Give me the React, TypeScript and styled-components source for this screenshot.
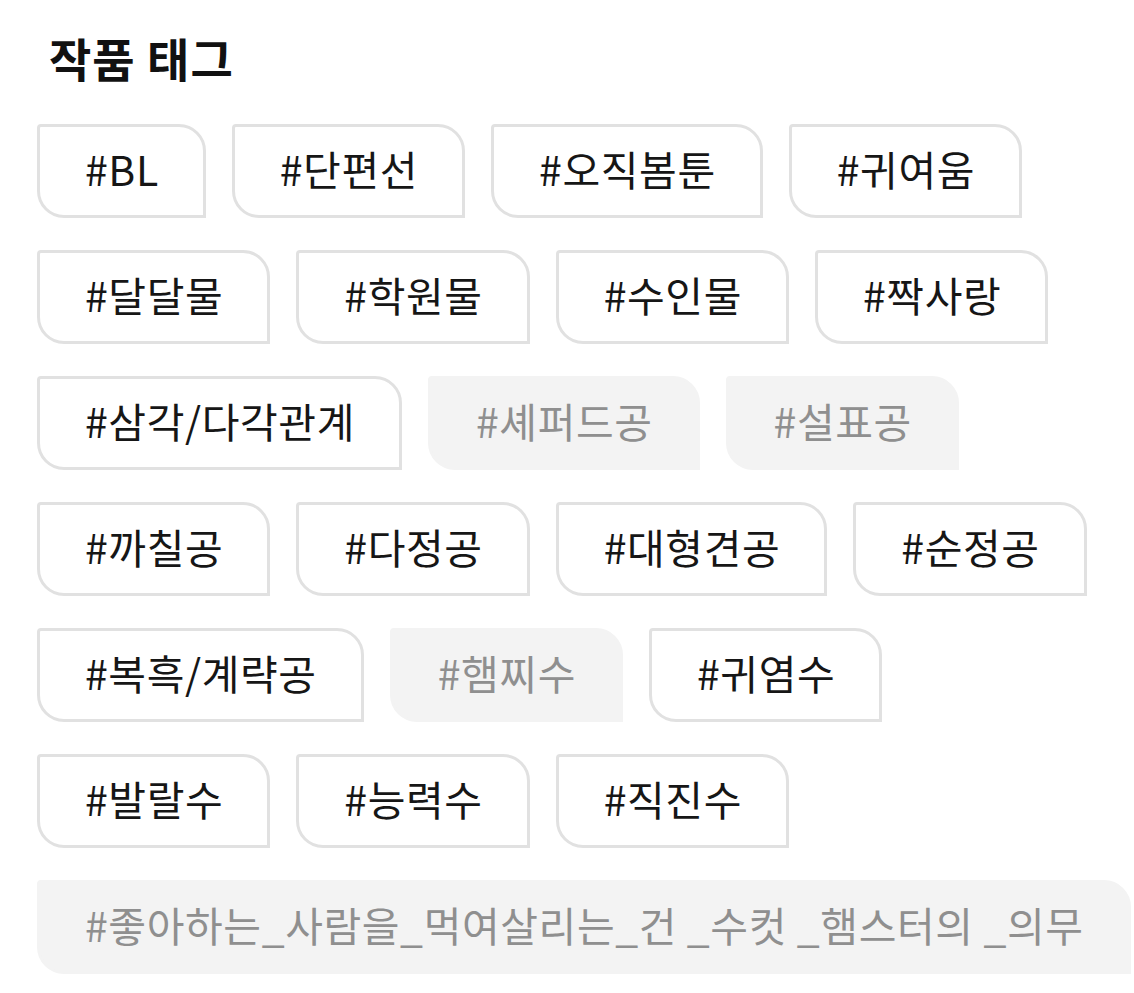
import React from "react";
import styled, { createGlobalStyle } from "styled-components";

const Global = createGlobalStyle`
  html, body {
    margin: 0;
    padding: 0;
    background: #ffffff;
  }
  body {
    font-family: "Noto Sans CJK KR", "Noto Sans", sans-serif;
    overflow: hidden;
  }
`;

const Page = styled.section`
  width: 1134px;
  padding: 34px 0 0 37px;
  box-sizing: border-box;
`;

const Title = styled.h2`
  margin: 0 0 44px 12px;
  font-size: 46px;
  line-height: 46px;
  font-weight: 700;
  color: #111111;
  letter-spacing: 1px;
`;

const TagList = styled.ul`
  list-style: none;
  margin: 0;
  padding: 0;
  display: flex;
  flex-wrap: wrap;
  column-gap: 26px;
  row-gap: 32px;
`;

const Tag = styled.li<{ $muted?: boolean }>`
  box-sizing: border-box;
  height: 94px;
  padding: 17px 44px 23px 45px;
  display: flex;
  align-items: center;
  white-space: nowrap;
  font-size: 41px;
  line-height: 48px;
  letter-spacing: 0.6px;
  font-weight: 400;
  color: ${(p) => (p.$muted ? "#8f8f8f" : "#161616")};
  background: ${(p) => (p.$muted ? "#f3f3f3" : "#ffffff")};
  border: 3px solid ${(p) => (p.$muted ? "#f3f3f3" : "#e1e1e1")};
  border-radius: 4px 27px 0 27px;
`;

const tags: { label: string; muted?: boolean }[] = [
  { label: "#BL" },
  { label: "#단편선" },
  { label: "#오직봄툰" },
  { label: "#귀여움" },
  { label: "#달달물" },
  { label: "#학원물" },
  { label: "#수인물" },
  { label: "#짝사랑" },
  { label: "#삼각/다각관계" },
  { label: "#셰퍼드공", muted: true },
  { label: "#설표공", muted: true },
  { label: "#까칠공" },
  { label: "#다정공" },
  { label: "#대형견공" },
  { label: "#순정공" },
  { label: "#복흑/계략공" },
  { label: "#햄찌수", muted: true },
  { label: "#귀염수" },
  { label: "#발랄수" },
  { label: "#능력수" },
  { label: "#직진수" },
  { label: "#좋아하는_사람을_먹여살리는_건 _수컷 _햄스터의 _의무", muted: true },
];

export default function App() {
  return (
    <>
      <Global />
      <Page>
        <Title>작품 태그</Title>
        <TagList>
          {tags.map((t) => (
            <Tag key={t.label} $muted={t.muted}>
              {t.label}
            </Tag>
          ))}
        </TagList>
      </Page>
    </>
  );
}
